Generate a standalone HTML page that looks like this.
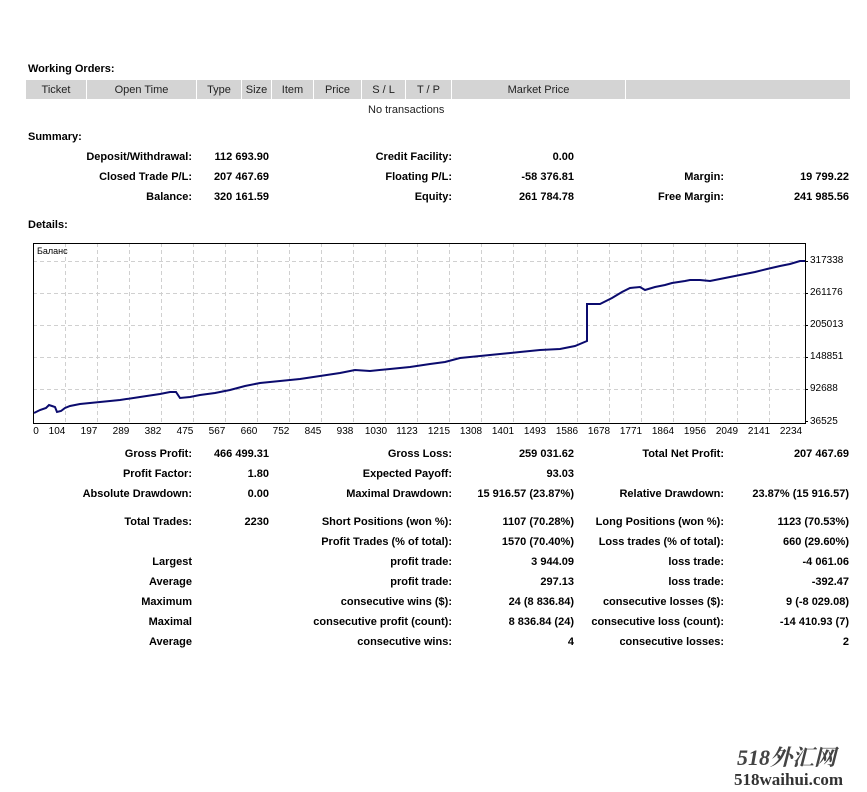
<!DOCTYPE html>
<html><head><meta charset="utf-8"><style>
body{margin:0;background:#fff;width:867px;height:792px;position:relative;overflow:hidden;font-family:"Liberation Sans",Tahoma,sans-serif;font-size:11px;color:#000}
.a{position:absolute;white-space:nowrap;line-height:13px}
.b{font-weight:bold}
.r{position:absolute;white-space:nowrap;line-height:13px;font-weight:bold;text-align:right}
.hd{position:absolute;top:80px;height:19px;background:#d4d4d4;line-height:20px;text-align:center;color:#222;font-size:11px}
</style></head><body>
<div class="a b" style="left:28px;top:63px">Working Orders:</div>
<div class="hd" style="left:26px;width:60px">Ticket</div>
<div class="hd" style="left:87px;width:109px">Open Time</div>
<div class="hd" style="left:197px;width:44px">Type</div>
<div class="hd" style="left:242px;width:29px">Size</div>
<div class="hd" style="left:272px;width:41px">Item</div>
<div class="hd" style="left:314px;width:47px">Price</div>
<div class="hd" style="left:362px;width:43px">S / L</div>
<div class="hd" style="left:406px;width:45px">T / P</div>
<div class="hd" style="left:452px;width:173px">Market Price</div>
<div class="hd" style="left:626px;width:224px"></div>
<div class="a" style="left:368px;top:104px;color:#222">No transactions</div>
<div class="a b" style="left:28px;top:131px">Summary:</div>

<div class="r" style="right:675px;top:151px">Deposit/Withdrawal:</div>
<div class="r" style="right:598px;top:151px">112 693.90</div>
<div class="r" style="right:415px;top:151px">Credit Facility:</div>
<div class="r" style="right:293px;top:151px">0.00</div>
<div class="r" style="right:675px;top:171px">Closed Trade P/L:</div>
<div class="r" style="right:598px;top:171px">207 467.69</div>
<div class="r" style="right:415px;top:171px">Floating P/L:</div>
<div class="r" style="right:293px;top:171px">-58 376.81</div>
<div class="r" style="right:143px;top:171px">Margin:</div>
<div class="r" style="right:18px;top:171px">19 799.22</div>
<div class="r" style="right:675px;top:191px">Balance:</div>
<div class="r" style="right:598px;top:191px">320 161.59</div>
<div class="r" style="right:415px;top:191px">Equity:</div>
<div class="r" style="right:293px;top:191px">261 784.78</div>
<div class="r" style="right:143px;top:191px">Free Margin:</div>
<div class="r" style="right:18px;top:191px">241 985.56</div>

<div class="a b" style="left:28px;top:219px">Details:</div>

<svg style="position:absolute;left:0;top:0" width="867" height="440">
<g stroke="#d0d0d0" stroke-dasharray="4,3" stroke-width="1">
<line x1="33" x2="805" y1="261.5" y2="261.5"/><line x1="33" x2="805" y1="293.5" y2="293.5"/>
<line x1="33" x2="805" y1="325.5" y2="325.5"/><line x1="33" x2="805" y1="357.5" y2="357.5"/>
<line x1="33" x2="805" y1="389.5" y2="389.5"/>
<line y1="243" y2="423" x1="65.5" x2="65.5"/><line y1="243" y2="423" x1="97.5" x2="97.5"/>
<line y1="243" y2="423" x1="129.5" x2="129.5"/><line y1="243" y2="423" x1="161.5" x2="161.5"/>
<line y1="243" y2="423" x1="193.5" x2="193.5"/><line y1="243" y2="423" x1="225.5" x2="225.5"/>
<line y1="243" y2="423" x1="257.5" x2="257.5"/><line y1="243" y2="423" x1="289.5" x2="289.5"/>
<line y1="243" y2="423" x1="321.5" x2="321.5"/><line y1="243" y2="423" x1="353.5" x2="353.5"/>
<line y1="243" y2="423" x1="385.5" x2="385.5"/><line y1="243" y2="423" x1="417.5" x2="417.5"/>
<line y1="243" y2="423" x1="449.5" x2="449.5"/><line y1="243" y2="423" x1="481.5" x2="481.5"/>
<line y1="243" y2="423" x1="513.5" x2="513.5"/><line y1="243" y2="423" x1="545.5" x2="545.5"/>
<line y1="243" y2="423" x1="577.5" x2="577.5"/><line y1="243" y2="423" x1="609.5" x2="609.5"/>
<line y1="243" y2="423" x1="641.5" x2="641.5"/><line y1="243" y2="423" x1="673.5" x2="673.5"/>
<line y1="243" y2="423" x1="705.5" x2="705.5"/><line y1="243" y2="423" x1="737.5" x2="737.5"/>
<line y1="243" y2="423" x1="769.5" x2="769.5"/>
</g>
<rect x="33.5" y="243.5" width="772" height="180" fill="none" stroke="#000"/>
<g stroke="#000"><line x1="805" x2="808" y1="261.5" y2="261.5"/><line x1="805" x2="808" y1="293.5" y2="293.5"/><line x1="805" x2="808" y1="325.5" y2="325.5"/><line x1="805" x2="808" y1="357.5" y2="357.5"/><line x1="805" x2="808" y1="389.5" y2="389.5"/><line x1="805" x2="808" y1="421.5" y2="421.5"/></g>
<polyline fill="none" stroke="#0b0b6e" stroke-width="2" points="34,413 40,410 46,408 49,405 52,406 55,407 57,412 61,411 65,408 70,406 80,404 100,402 120,400 140,397 160,394 170,392 176,392 180,398 190,397 200,395 215,393 230,390 245,386 260,383 280,381 300,379 320,376 340,373 355,370 370,371 390,369 410,367 430,364 445,362 460,358 480,356 500,354 520,352 540,350 560,349 575,346 587,341 587,304 600,304 612,298 622,292 630,288 640,287 645,290 655,287 665,285 672,283 685,281 690,280 700,280 710,281 725,278 740,275 755,272 767,269 780,266 790,264 800,261 805,261"/>
<text x="37" y="254" font-size="9" fill="#000" font-family="Liberation Sans,sans-serif">Баланс</text>
<g font-size="10" fill="#000" font-family="Liberation Sans,sans-serif">
<text x="810" y="263">317338</text><text x="810" y="295">261176</text><text x="810" y="327">205013</text>
<text x="810" y="359">148851</text><text x="810" y="391">92688</text><text x="810" y="424">36525</text>
</g>
<g font-size="10" fill="#000" text-anchor="middle" font-family="Liberation Sans,sans-serif">
<text x="36" y="434">0</text><text x="57" y="434">104</text><text x="89" y="434">197</text><text x="121" y="434">289</text>
<text x="153" y="434">382</text><text x="185" y="434">475</text><text x="217" y="434">567</text><text x="249" y="434">660</text>
<text x="281" y="434">752</text><text x="313" y="434">845</text><text x="345" y="434">938</text><text x="376" y="434">1030</text>
<text x="407" y="434">1123</text><text x="439" y="434">1215</text><text x="471" y="434">1308</text><text x="503" y="434">1401</text>
<text x="535" y="434">1493</text><text x="567" y="434">1586</text><text x="599" y="434">1678</text><text x="631" y="434">1771</text>
<text x="663" y="434">1864</text><text x="695" y="434">1956</text><text x="727" y="434">2049</text><text x="759" y="434">2141</text>
<text x="791" y="434">2234</text>
</g>
</svg>

<div class="r" style="right:675px;top:448px">Gross Profit:</div>
<div class="r" style="right:598px;top:448px">466 499.31</div>
<div class="r" style="right:415px;top:448px">Gross Loss:</div>
<div class="r" style="right:293px;top:448px">259 031.62</div>
<div class="r" style="right:143px;top:448px">Total Net Profit:</div>
<div class="r" style="right:18px;top:448px">207 467.69</div>

<div class="r" style="right:675px;top:468px">Profit Factor:</div>
<div class="r" style="right:598px;top:468px">1.80</div>
<div class="r" style="right:415px;top:468px">Expected Payoff:</div>
<div class="r" style="right:293px;top:468px">93.03</div>

<div class="r" style="right:675px;top:488px">Absolute Drawdown:</div>
<div class="r" style="right:598px;top:488px">0.00</div>
<div class="r" style="right:415px;top:488px">Maximal Drawdown:</div>
<div class="r" style="right:293px;top:488px">15 916.57 (23.87%)</div>
<div class="r" style="right:143px;top:488px">Relative Drawdown:</div>
<div class="r" style="right:18px;top:488px">23.87% (15 916.57)</div>

<div class="r" style="right:675px;top:516px">Total Trades:</div>
<div class="r" style="right:598px;top:516px">2230</div>
<div class="r" style="right:415px;top:516px">Short Positions (won %):</div>
<div class="r" style="right:293px;top:516px">1107 (70.28%)</div>
<div class="r" style="right:143px;top:516px">Long Positions (won %):</div>
<div class="r" style="right:18px;top:516px">1123 (70.53%)</div>

<div class="r" style="right:415px;top:536px">Profit Trades (% of total):</div>
<div class="r" style="right:293px;top:536px">1570 (70.40%)</div>
<div class="r" style="right:143px;top:536px">Loss trades (% of total):</div>
<div class="r" style="right:18px;top:536px">660 (29.60%)</div>

<div class="r" style="right:675px;top:556px">Largest</div>
<div class="r" style="right:415px;top:556px">profit trade:</div>
<div class="r" style="right:293px;top:556px">3 944.09</div>
<div class="r" style="right:143px;top:556px">loss trade:</div>
<div class="r" style="right:18px;top:556px">-4 061.06</div>

<div class="r" style="right:675px;top:576px">Average</div>
<div class="r" style="right:415px;top:576px">profit trade:</div>
<div class="r" style="right:293px;top:576px">297.13</div>
<div class="r" style="right:143px;top:576px">loss trade:</div>
<div class="r" style="right:18px;top:576px">-392.47</div>

<div class="r" style="right:675px;top:596px">Maximum</div>
<div class="r" style="right:415px;top:596px">consecutive wins ($):</div>
<div class="r" style="right:293px;top:596px">24 (8 836.84)</div>
<div class="r" style="right:143px;top:596px">consecutive losses ($):</div>
<div class="r" style="right:18px;top:596px">9 (-8 029.08)</div>

<div class="r" style="right:675px;top:616px">Maximal</div>
<div class="r" style="right:415px;top:616px">consecutive profit (count):</div>
<div class="r" style="right:293px;top:616px">8 836.84 (24)</div>
<div class="r" style="right:143px;top:616px">consecutive loss (count):</div>
<div class="r" style="right:18px;top:616px">-14 410.93 (7)</div>

<div class="r" style="right:675px;top:636px">Average</div>
<div class="r" style="right:415px;top:636px">consecutive wins:</div>
<div class="r" style="right:293px;top:636px">4</div>
<div class="r" style="right:143px;top:636px">consecutive losses:</div>
<div class="r" style="right:18px;top:636px">2</div>

<div class="a" style="left:737px;top:746px;font-size:22px;line-height:24px;color:#444;font-style:italic;font-family:'Liberation Serif','Noto Serif CJK SC',serif;font-weight:bold">518外汇网</div>
<div class="a" style="left:734px;top:771px;font-size:17px;line-height:18px;color:#333;font-weight:bold;font-family:'Liberation Serif',serif">518waihui.com</div>
</body></html>
